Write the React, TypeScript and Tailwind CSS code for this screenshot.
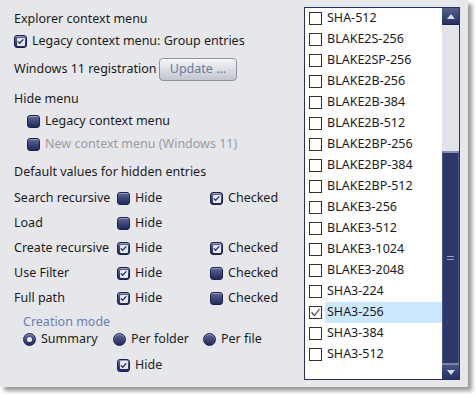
import { ReactNode } from "react";

const hashes = [
  "SHA-512",
  "BLAKE2S-256",
  "BLAKE2SP-256",
  "BLAKE2B-256",
  "BLAKE2B-384",
  "BLAKE2B-512",
  "BLAKE2BP-256",
  "BLAKE2BP-384",
  "BLAKE2BP-512",
  "BLAKE3-256",
  "BLAKE3-512",
  "BLAKE3-1024",
  "BLAKE3-2048",
  "SHA3-224",
  "SHA3-256",
  "SHA3-384",
  "SHA3-512",
];

function NavyCheck({ checked }: { checked?: boolean }) {
  return (
    <div className="flex h-[13px] w-[13px] shrink-0 items-center justify-center rounded-[3px] border border-[#1a2050] bg-gradient-to-b from-[#5e6798] to-[#222a5a] shadow-[inset_0_1px_0_rgba(255,255,255,0.35)]">
      {checked && (
        <div className="flex h-[8px] w-[8px] items-center justify-center rounded-[1px] bg-[#e6e9f4]">
          <svg viewBox="0 0 8 8" width="7" height="7" fill="none" stroke="#2a3366" strokeWidth={1.4}>
            <path d="M1.2 4.2l1.8 1.8L6.8 2" strokeLinecap="round" strokeLinejoin="round" />
          </svg>
        </div>
      )}
    </div>
  );
}

function NavyRadio({ checked }: { checked?: boolean }) {
  return (
    <div className="flex h-[13px] w-[13px] shrink-0 items-center justify-center rounded-full border border-[#1a2050] bg-gradient-to-b from-[#5e6798] to-[#222a5a] shadow-[inset_0_1px_0_rgba(255,255,255,0.35)]">
      {checked && <div className="h-[5px] w-[5px] rounded-full bg-[#eef0f8]" />}
    </div>
  );
}

function Check({ checked, children, muted }: { checked?: boolean; children: ReactNode; muted?: boolean }) {
  return (
    <div className="flex items-center gap-[5px]">
      <NavyCheck checked={checked} />
      <span className={muted ? "text-[#9a9ca3]" : ""}>{children}</span>
    </div>
  );
}

function HiddenRow({ label, hide, checked }: { label: string; hide?: boolean; checked?: boolean | null }) {
  return (
    <div className="flex h-[25px] items-center">
      <span className="w-[103px]">{label}</span>
      <div className="w-[93px]">
        <Check checked={hide}>Hide</Check>
      </div>
      {checked !== null && <Check checked={checked ?? false}>Checked</Check>}
    </div>
  );
}

function ListBox() {
  return (
    <div className="mt-[7px] flex h-[373px] w-[156px] border border-[#27305f] bg-white">
      <div className="flex-1">
        {hashes.map((h) => {
          const on = h === "SHA3-256";
          return (
            <div key={h} className="flex h-[21px] items-center pl-[4px]">
              <div className="flex h-[13px] w-[13px] shrink-0 items-center justify-center border border-[#333333] bg-white">
                {on && (
                  <svg viewBox="0 0 11 11" width="11" height="11" fill="none" stroke="#333" strokeWidth={1.1}>
                    <path d="M1.5 5.5l3 3L9.5 2" />
                  </svg>
                )}
              </div>
              <div
                className={
                  "ml-[3px] flex h-[21px] flex-1 items-center pl-[2px] " + (on ? "bg-[#cce8ff]" : "")
                }
              >
                {h}
              </div>
            </div>
          );
        })}
      </div>
      <div className="flex w-[17px] flex-col bg-[#e2e4ea]">
        <div className="flex h-[17px] items-center justify-center border-b border-[#1c2350] bg-gradient-to-b from-[#56608f] to-[#26305f]">
          <svg viewBox="0 0 8 5" width="8" height="5">
            <path d="M4 0L8 5H0z" fill="#d8dcea" />
          </svg>
        </div>
        <div className="h-[126px]" />
        <div className="flex flex-1 items-center justify-center border-x border-[#4b5588] border-t-[2px] border-t-[#8890b8] bg-[#2d3768]">
          <div className="flex flex-col gap-[2px]">
            <div className="h-px w-[7px] bg-[#9aa2c8]" />
            <div className="h-px w-[7px] bg-[#9aa2c8]" />
          </div>
        </div>
        <div className="flex h-[16px] items-center justify-center border-t-[2px] border-t-[#7c84ac] bg-gradient-to-b from-[#4a5484] to-[#26305f]">
          <svg viewBox="0 0 8 5" width="8" height="5">
            <path d="M0 0H8L4 5z" fill="#d8dcea" />
          </svg>
        </div>
      </div>
    </div>
  );
}

export default function App() {
  return (
    <div className="h-[394px] w-[476px] bg-white">
      <div
        className="flex h-[387px] w-[468px] bg-[#e6e7eb] text-[12.5px] text-[#1b1b1b] shadow-[4px_4px_4px_rgba(0,0,0,0.4)]"
        style={{ fontFamily: '"Noto Sans", "Open Sans", sans-serif' }}
      >
        <div className="flex w-[304px] flex-col pl-[14px] pt-[8px]">
          <div className="flex h-[22px] items-center">Explorer context menu</div>
          <div className="flex h-[23px] items-center">
            <Check checked>Legacy context menu: Group entries</Check>
          </div>
          <div className="mt-[5px] flex h-[23px] items-center">
            <span className="w-[145px]">Windows 11 registration</span>
            <div className="flex h-[23px] w-[78px] items-center justify-center rounded-[4px] border border-[#8d929e] bg-gradient-to-b from-[#f6f7f9] via-[#dcdee4] to-[#c3c6ce] text-[#6d789c] shadow-[inset_0_1px_0_#ffffff]">
              Update ...
            </div>
          </div>
          <div className="mt-[7px] flex h-[22px] items-center">Hide menu</div>
          <div className="flex h-[22px] items-center pl-[13px]">
            <Check>Legacy context menu</Check>
          </div>
          <div className="flex h-[24px] items-center pl-[13px]">
            <Check muted>New context menu (Windows 11)</Check>
          </div>
          <div className="mt-[5px] flex h-[22px] items-center">Default values for hidden entries</div>
          <div className="mt-[3px]">
            <HiddenRow label="Search recursive" checked />
            <HiddenRow label="Load" checked={null} />
            <HiddenRow label="Create recursive" hide checked />
            <HiddenRow label="Use Filter" hide checked={false} />
            <HiddenRow label="Full path" hide checked={false} />
          </div>
          <div className="mt-[1px] flex h-[20px] items-center pl-[9px] text-[#6a7fae]">Creation mode</div>
          <div className="flex h-[15px] items-center pl-[9px]">
            <div className="flex w-[90px] items-center gap-[5px]">
              <NavyRadio checked />
              <span>Summary</span>
            </div>
            <div className="flex w-[90px] items-center gap-[5px]">
              <NavyRadio />
              <span>Per folder</span>
            </div>
            <div className="flex items-center gap-[5px]">
              <NavyRadio />
              <span>Per file</span>
            </div>
          </div>
          <div className="mt-[6px] flex h-[24px] items-center pl-[103px]">
            <Check checked>Hide</Check>
          </div>
        </div>
        <ListBox />
      </div>
    </div>
  );
}
